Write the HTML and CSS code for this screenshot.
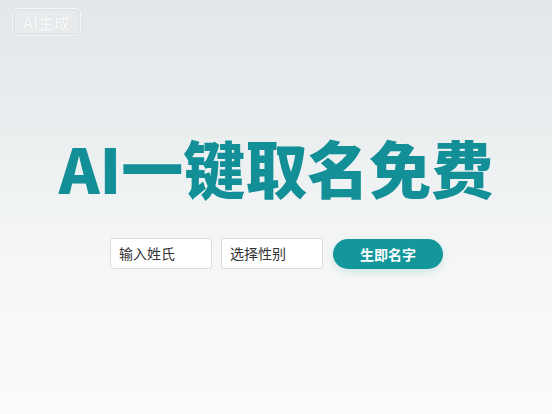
FILE: index.html
```html
<!DOCTYPE html>
<html lang="zh">
<head>
<meta charset="utf-8">
<link rel="stylesheet" href="styles.css">
</head>
<body>
<div class="page">
  <div class="badge">AI生成</div>
  <main class="hero">
    <h1 class="title">AI一键取名免费</h1>
    <form class="form">
      <div class="field">输入姓氏</div>
      <div class="field">选择性别</div>
      <button class="btn" type="button">生即名字</button>
    </form>
  </main>
</div>
</body>
</html>
```
FILE: styles.css
```css
html, body {
  margin: 0;
  padding: 0;
}
body {
  width: 552px;
  height: 414px;
  overflow: hidden;
  font-family: "Noto Sans CJK SC", "Noto Sans", sans-serif;
}
.page {
  position: relative;
  width: 552px;
  height: 414px;
  background: linear-gradient(180deg, #e4e7e9 0%, #eceff0 35%, #f5f7f6 62%, #fbfbf9 100%);
  display: flex;
  flex-direction: column;
  align-items: center;
}
.badge {
  position: absolute;
  left: 12px;
  top: 8px;
  box-sizing: border-box;
  width: 69px;
  height: 28px;
  line-height: 26px;
  text-align: center;
  font-size: 16px;
  font-weight: 500;
  color: #f8f9fa;
  border: 1px solid #f3f5f6;
  border-radius: 5px;
  background: rgba(255,255,255,0.14);
  box-shadow: 0 0 2px rgba(0,0,0,0.07), inset 0 0 0 2px rgba(220,224,226,0.5);
  text-shadow: 0 0 1px rgba(0,0,0,0.12);
}
.hero {
  display: flex;
  flex-direction: column;
  align-items: center;
  padding-top: 127px;
}
.title {
  margin: 0;
  font-size: 62px;
  line-height: 80px;
  font-weight: 900;
  color: #128f97;
}
.form {
  display: flex;
  align-items: center;
  margin-top: 31px;
  margin-left: 1px;
}
.field {
  width: 92px;
  height: 29px;
  padding-left: 8px;
  line-height: 29px;
  font-size: 14px;
  color: #333;
  background: #fff;
  border: 1px solid #dcdcdc;
  border-radius: 3px;
  margin-right: 9px;
}
.field + .field {
  margin-right: 10px;
}
.btn {
  width: 110px;
  height: 30px;
  border: none;
  border-radius: 15px;
  background: #14979b;
  color: #fff;
  font-family: inherit;
  font-size: 14px;
  font-weight: 700;
  box-shadow: 0 3px 8px rgba(20,151,155,0.18);
  padding: 0;
}
```
